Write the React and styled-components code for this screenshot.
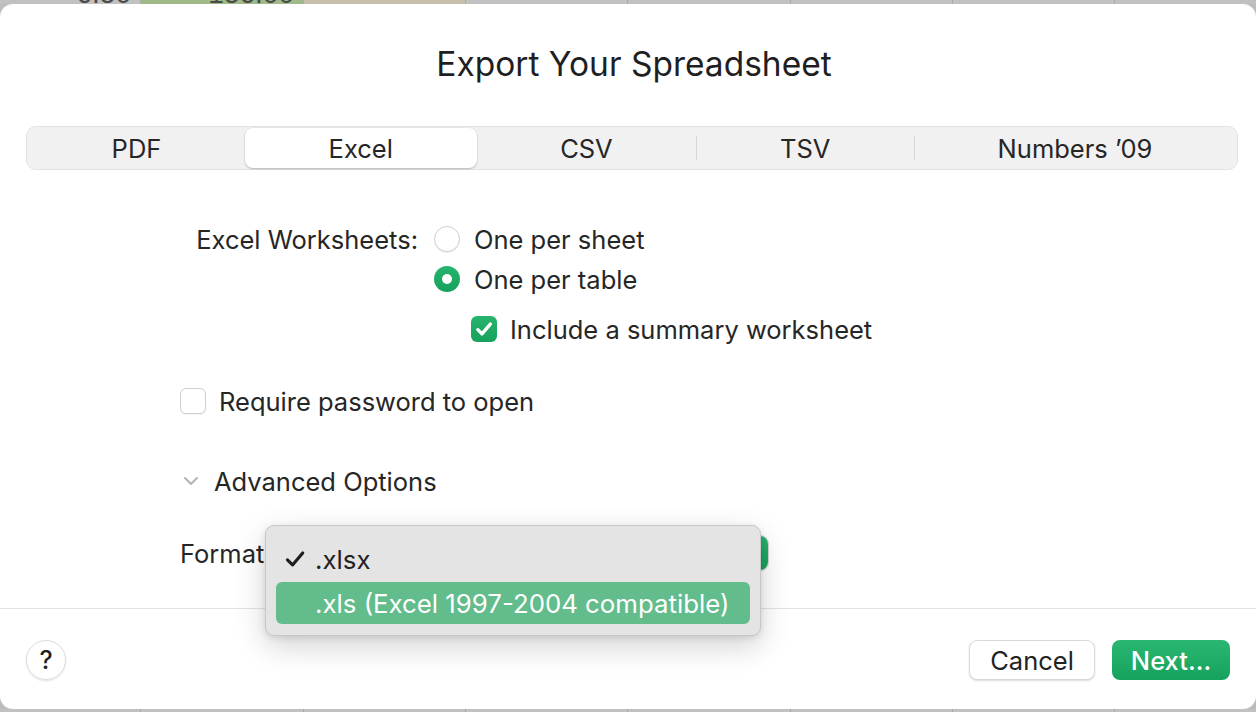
import styled, { createGlobalStyle } from "styled-components";

const GlobalStyle = createGlobalStyle`
  html, body {
    margin: 0;
    padding: 0;
    background: #bdbdbd;
  }
  body {
    font-family: Inter, "Noto Sans", "Liberation Sans", sans-serif;
    color: #242424;
    -webkit-font-smoothing: antialiased;
  }
`;

const Page = styled.div`
  width: 1256px;
  height: 712px;
  display: flex;
  flex-direction: column;
  overflow: hidden;
`;

const SheetStrip = styled.div`
  height: ${(p) => p.$h}px;
  display: flex;
  overflow: hidden;
  flex-shrink: 0;
  background: #c1c1c1;
`;

const SheetCell = styled.div`
  width: ${(p) => p.$w}px;
  flex-shrink: 0;
  display: flex;
  align-items: flex-end;
  justify-content: flex-end;
  padding-right: 9px;
  box-sizing: border-box;
  background: ${(p) => p.$bg || "#c1c1c1"};
  border-right: 1px solid #a9a9a9;
  font-family: "Liberation Sans", Arial, sans-serif;
  font-size: 28px;
  color: #4a4a4a;
  span {
    line-height: 1;
    margin-bottom: -4px;
  }
`;

const Dialog = styled.div`
  flex: 1;
  background: #ffffff;
  border-radius: 13px;
  display: flex;
  flex-direction: column;
  position: relative;
`;

const Title = styled.h1`
  margin: 40px 0 0;
  padding-left: 12px;
  height: 40px;
  line-height: 40px;
  text-align: center;
  font-size: 33.5px;
  font-weight: 400;
  color: #1f1f1f;
`;

const Segmented = styled.div`
  margin: 42px 18px 0 26px;
  height: 44px;
  box-sizing: border-box;
  background: #f1f1f1;
  border: 1px solid #e2e2e2;
  border-radius: 10px;
  display: flex;
  align-items: stretch;
  padding: 1px;
`;

const Segment = styled.div`
  flex: 1 1 auto;
  padding: 0 10px;
  display: flex;
  align-items: center;
  justify-content: center;
  font-size: 25.5px;
  color: #262626;
  border-radius: 8px;
  position: relative;
  background: ${(p) => (p.$active ? "#ffffff" : "transparent")};
  box-shadow: ${(p) =>
    p.$active ? "0 1px 2px rgba(0,0,0,0.22), 0 0 0 0.5px rgba(0,0,0,0.06)" : "none"};
  ${(p) =>
    p.$divider &&
    `
    &::before {
      content: "";
      position: absolute;
      left: 0;
      top: 8px;
      bottom: 8px;
      width: 1px;
      background: #d6d6d6;
    }
  `}
`;

const Form = styled.div`
  padding-left: 180px;
  font-size: 25.5px;
  color: #262626;
`;

const Worksheets = styled.div`
  margin-top: 49px;
  display: grid;
  grid-template-columns: 238px auto;
  column-gap: 16px;
`;

const GroupLabel = styled.div`
  height: 40px;
  display: flex;
  align-items: center;
  justify-content: flex-end;
`;

const Choices = styled.div`
  display: flex;
  flex-direction: column;
`;

const OptionRow = styled.div`
  height: 40px;
  display: flex;
  align-items: center;
  gap: ${(p) => p.$gap || 14}px;
  margin-left: ${(p) => p.$indent || 0}px;
  margin-top: ${(p) => p.$top || 0}px;
`;

const Radio = styled.span`
  width: 26px;
  height: 26px;
  border-radius: 50%;
  box-sizing: border-box;
  flex-shrink: 0;
  display: flex;
  align-items: center;
  justify-content: center;
  background: ${(p) => (p.$on ? "linear-gradient(#27b46e, #16a15c)" : "#ffffff")};
  border: ${(p) => (p.$on ? "none" : "1px solid #cfcfcf")};
  box-shadow: ${(p) => (p.$on ? "none" : "0 1px 1px rgba(0,0,0,0.06)")};
  &::after {
    content: "";
    display: ${(p) => (p.$on ? "block" : "none")};
    width: 10px;
    height: 10px;
    border-radius: 50%;
    background: #ffffff;
  }
`;

const Check = styled.span`
  width: 26px;
  height: 26px;
  border-radius: 6px;
  box-sizing: border-box;
  flex-shrink: 0;
  display: flex;
  align-items: center;
  justify-content: center;
  background: ${(p) => (p.$on ? "linear-gradient(#27b46e, #16a15c)" : "#ffffff")};
  border: ${(p) => (p.$on ? "none" : "1px solid #cfcfcf")};
  box-shadow: ${(p) => (p.$on ? "none" : "0 1px 1px rgba(0,0,0,0.05)")};
`;

const Disclosure = styled.div`
  height: 40px;
  margin-top: 40px;
  display: flex;
  align-items: center;
  gap: 15px;
  padding-left: 3px;
`;

const FormatRow = styled.div`
  width: 588px;
  height: 40px;
  margin-top: 32px;
  display: flex;
  align-items: center;
  position: relative;
`;

const PopupButton = styled.div`
  margin-left: 10px;
  flex: 1;
  height: 34px;
  box-sizing: border-box;
  border-radius: 8px;
  background: #ffffff;
  box-shadow: 0 0 0 1px #d4d4d4, 0 1px 2px rgba(0,0,0,0.15);
  display: flex;
  justify-content: flex-end;
  overflow: hidden;
  &::after {
    content: "";
    width: 22px;
    height: 100%;
    background: linear-gradient(#27b46e, #16a15c);
  }
`;

const Menu = styled.div`
  position: absolute;
  left: 85px;
  top: -8px;
  width: 496px;
  box-sizing: border-box;
  padding: 12px 10px 11px;
  background: #e5e4e5;
  border: 1px solid #c7c7c7;
  border-radius: 9px;
  box-shadow: 0 10px 30px rgba(0,0,0,0.18), 0 2px 6px rgba(0,0,0,0.1);
  display: flex;
  flex-direction: column;
  gap: 2px;
  z-index: 2;
`;

const MenuItem = styled.div`
  height: 42px;
  display: flex;
  align-items: center;
  border-radius: 6px;
  padding-left: 8px;
  font-size: 25.8px;
  color: ${(p) => (p.$hot ? "#ffffff" : "#222222")};
  background: ${(p) => (p.$hot ? "#62bc8b" : "transparent")};
`;

const Mark = styled.span`
  width: 31px;
  display: flex;
  align-items: center;
`;

const Separator = styled.div`
  margin-top: auto;
  height: 1px;
  background: #e3e3e3;
`;

const Footer = styled.div`
  height: 100px;
  box-sizing: border-box;
  padding: 31px 26px 0 26px;
  display: flex;
  align-items: flex-start;
  gap: 17px;
`;

const HelpButton = styled.div`
  width: 40px;
  height: 40px;
  border-radius: 50%;
  box-sizing: border-box;
  border: 1px solid #dcdcdc;
  box-shadow: 0 1px 2px rgba(0,0,0,0.12);
  display: flex;
  align-items: center;
  justify-content: center;
  font-size: 25px;
  font-weight: 500;
  color: #1f1f1f;
  margin-right: auto;
`;

const Button = styled.div`
  height: 40px;
  box-sizing: border-box;
  width: ${(p) => p.$w}px;
  border-radius: 8px;
  display: flex;
  align-items: center;
  justify-content: center;
  font-size: 25.5px;
  color: ${(p) => (p.$primary ? "#ffffff" : "#222222")};
  font-weight: ${(p) => (p.$primary ? 500 : 400)};
  background: ${(p) => (p.$primary ? "linear-gradient(#29b771, #14a25c)" : "#ffffff")};
  border: ${(p) => (p.$primary ? "none" : "1px solid #d9d9d9")};
  box-shadow: ${(p) => (p.$primary ? "none" : "0 1px 2px rgba(0,0,0,0.14)")};
`;

const topCells = [
  { w: 141, text: "6.50" },
  { w: 163, text: "156.00", bg: "#9fba88" },
  { w: 162, bg: "#c6bfac" },
  { w: 162 },
  { w: 163 },
  { w: 162 },
  { w: 162 },
  { w: 200 },
];

const bottomCells = [141, 163, 162, 162, 163, 162, 162, 200];

function CheckGlyph({ color = "#ffffff", size = 18, width = 3 }) {
  return (
    <svg width={size} height={size} viewBox="0 0 16 16">
      <path
        d="M2.5 8.6 L6.2 12.3 L13.6 3.6"
        fill="none"
        stroke={color}
        strokeWidth={width}
        strokeLinecap="round"
        strokeLinejoin="round"
      />
    </svg>
  );
}

function Chevron() {
  return (
    <svg width="16" height="10" viewBox="0 0 16 10">
      <path
        d="M2 2 L8 8 L14 2"
        fill="none"
        stroke="#b3b3b3"
        strokeWidth="2"
        strokeLinecap="round"
        strokeLinejoin="round"
      />
    </svg>
  );
}

const tabs = ["PDF", "Excel", "CSV", "TSV", "Numbers \u201909"];

export default function App() {
  const active = 1;
  return (
    <Page>
      <GlobalStyle />
      <SheetStrip $h={4}>
        {topCells.map((c, i) => (
          <SheetCell key={i} $w={c.w} $bg={c.bg}>
            {c.text && <span>{c.text}</span>}
          </SheetCell>
        ))}
      </SheetStrip>

      <Dialog>
        <Title>Export Your Spreadsheet</Title>

        <Segmented>
          {tabs.map((t, i) => (
            <Segment
              key={t}
              $active={i === active}
              $divider={i > 0 && i !== active && i - 1 !== active}
            >
              {t}
            </Segment>
          ))}
        </Segmented>

        <Form>
          <Worksheets>
            <GroupLabel>Excel Worksheets:</GroupLabel>
            <Choices>
              <OptionRow>
                <Radio />
                One per sheet
              </OptionRow>
              <OptionRow>
                <Radio $on />
                One per table
              </OptionRow>
              <OptionRow $indent={37} $gap={13} $top={10}>
                <Check $on>
                  <CheckGlyph />
                </Check>
                Include a summary worksheet
              </OptionRow>
            </Choices>
          </Worksheets>

          <OptionRow $gap={13} $top={32}>
            <Check />
            Require password to open
          </OptionRow>

          <Disclosure>
            <Chevron />
            Advanced Options
          </Disclosure>

          <FormatRow>
            Format:
            <PopupButton />
            <Menu>
              <MenuItem>
                <Mark>
                  <CheckGlyph color="#1e1e1e" size={22} width={2.3} />
                </Mark>
                .xlsx
              </MenuItem>
              <MenuItem $hot>
                <Mark />
                .xls (Excel 1997-2004 compatible)
              </MenuItem>
            </Menu>
          </FormatRow>
        </Form>

        <Separator />
        <Footer>
          <HelpButton>?</HelpButton>
          <Button $w={126}>Cancel</Button>
          <Button $w={118} $primary>
            Next…
          </Button>
        </Footer>
      </Dialog>

      <SheetStrip $h={3}>
        {bottomCells.map((w, i) => (
          <SheetCell key={i} $w={w} />
        ))}
      </SheetStrip>
    </Page>
  );
}
